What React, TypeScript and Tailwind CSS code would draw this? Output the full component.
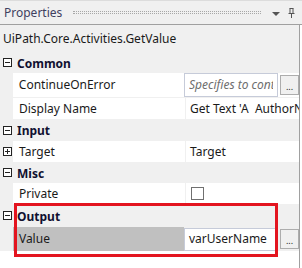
import React from 'react';

const Box: React.FC<{ plus?: boolean }> = ({ plus }) => (
  <svg width="9" height="9" viewBox="0 0 9 9" className="block">
    <rect x="0.5" y="0.5" width="8" height="8" fill="#fff" stroke="#222" />
    <line x1="2" y1="4.5" x2="7" y2="4.5" stroke="#222" />
    {plus && <line x1="4.5" y1="2" x2="4.5" y2="7" stroke="#222" />}
  </svg>
);

const Category: React.FC<{ title: string; h: string }> = ({ title, h }) => (
  <div className={`flex items-center ${h}`}>
    <div className="w-[17px] flex justify-start pl-[3px]">
      <Box />
    </div>
    <span className="font-bold text-[#101030] pt-[2px]">{title}</span>
  </div>
);

const Ellipsis: React.FC = () => (
  <div className="ml-[2px] w-[19px] h-[20px] border border-[#adadad] bg-[#f0f0f0] flex items-end justify-center pb-[3px] text-[9px] leading-none text-[#222]">
    ...
  </div>
);

const App: React.FC = () => {
  return (
    <div className="relative w-[302px] h-[268px] bg-white font-['Segoe_UI','Noto_Sans',sans-serif] text-[12px] text-[#1a1a1a] overflow-hidden">
      {/* title bar */}
      <div className="flex items-center h-[25px] border-t border-[#dcdcdc] border-b border-b-[#a0a0a0] bg-[#f0f0f0] pl-[4px] pr-[7px]">
        <span className="text-[#404060]">Properties</span>
        <div className="flex-1 mx-[11px] h-[3px] border-t border-b border-dotted border-[#a8a8a8]" />
        <svg width="8" height="4" viewBox="0 0 8 4" className="mr-[8px] mt-[2px]">
          <polygon points="0,0 8,0 4,4" fill="#555" />
        </svg>
        <svg width="7" height="10" viewBox="0 0 7 10">
          <path d="M1.5 0.5h4M2 0.5v5M5 0.5v5M0.5 5.5h6M3.5 5.5v4.5" stroke="#555" fill="none" />
        </svg>
      </div>

      <div className="w-[300px] border-r border-[#a0a0a0] h-[243px] flex flex-col">
        <div className="bg-[#f0f0f0]">
          <div className="h-[27px] flex items-center pl-[3px]">UiPath.Core.Activities.GetValue</div>

          <Category title="Common" h="h-[21px]" />
          <div className="flex h-[25px]">
            <div className="w-[13px]" />
            <div className="w-[172px] bg-white flex items-center pl-[6px] border-b border-[#f0f0f0]">ContinueOnError</div>
            <div className="flex-1 flex items-center bg-white border-b border-[#f0f0f0] pl-[1px]">
              <div className="w-[94px] h-[24px] border border-[#c6cbd9] flex items-center pl-[4px] italic text-[#6e6e6e] overflow-hidden whitespace-nowrap">
                <span className="block w-[84px] overflow-hidden">Specifies to cont</span>
              </div>
              <Ellipsis />
            </div>
          </div>
          <div className="flex h-[21px]">
            <div className="w-[13px]" />
            <div className="w-[172px] bg-white flex items-center pl-[6px]">Display Name</div>
            <div className="flex-1 bg-white border-l border-[#f0f0f0] flex items-center pl-[4px] overflow-hidden whitespace-nowrap">
              Get Text 'A&nbsp;&nbsp;AuthorN
            </div>
          </div>

          <Category title="Input" h="h-[22px]" />
          <div className="flex h-[21px]">
            <div className="w-[13px] flex items-center pl-[3px]">
              <Box plus />
            </div>
            <div className="w-[172px] bg-white flex items-center pl-[6px]">Target</div>
            <div className="flex-1 bg-white border-l border-[#f0f0f0] flex items-center pl-[4px]">Target</div>
          </div>

          <Category title="Misc" h="h-[21px]" />
          <div className="flex h-[21px]">
            <div className="w-[13px]" />
            <div className="w-[172px] bg-white flex items-center pl-[6px]">Private</div>
            <div className="flex-1 bg-white border-l border-[#f0f0f0] flex items-center pl-[5px]">
              <div className="w-[13px] h-[13px] border border-[#707070] bg-white" />
            </div>
          </div>

          <Category title="Output" h="h-[23px]" />
          <div className="flex h-[24px]">
            <div className="w-[13px]" />
            <div className="w-[172px] bg-[#c0c0c0] flex items-center pl-[6px]">Value</div>
            <div className="flex-1 flex items-center bg-[#f0f0f0]">
              <div className="w-[94px] h-[23px] border border-[#c6cbd9] bg-white flex items-center pl-[4px]">varUserName</div>
              <Ellipsis />
            </div>
          </div>
        </div>
      </div>

      {/* annotation */}
      <div className="absolute left-[14px] top-[203px] w-[264px] h-[54px] border-[3px] border-[#e3141f]" />
    </div>
  );
};

export default App;
